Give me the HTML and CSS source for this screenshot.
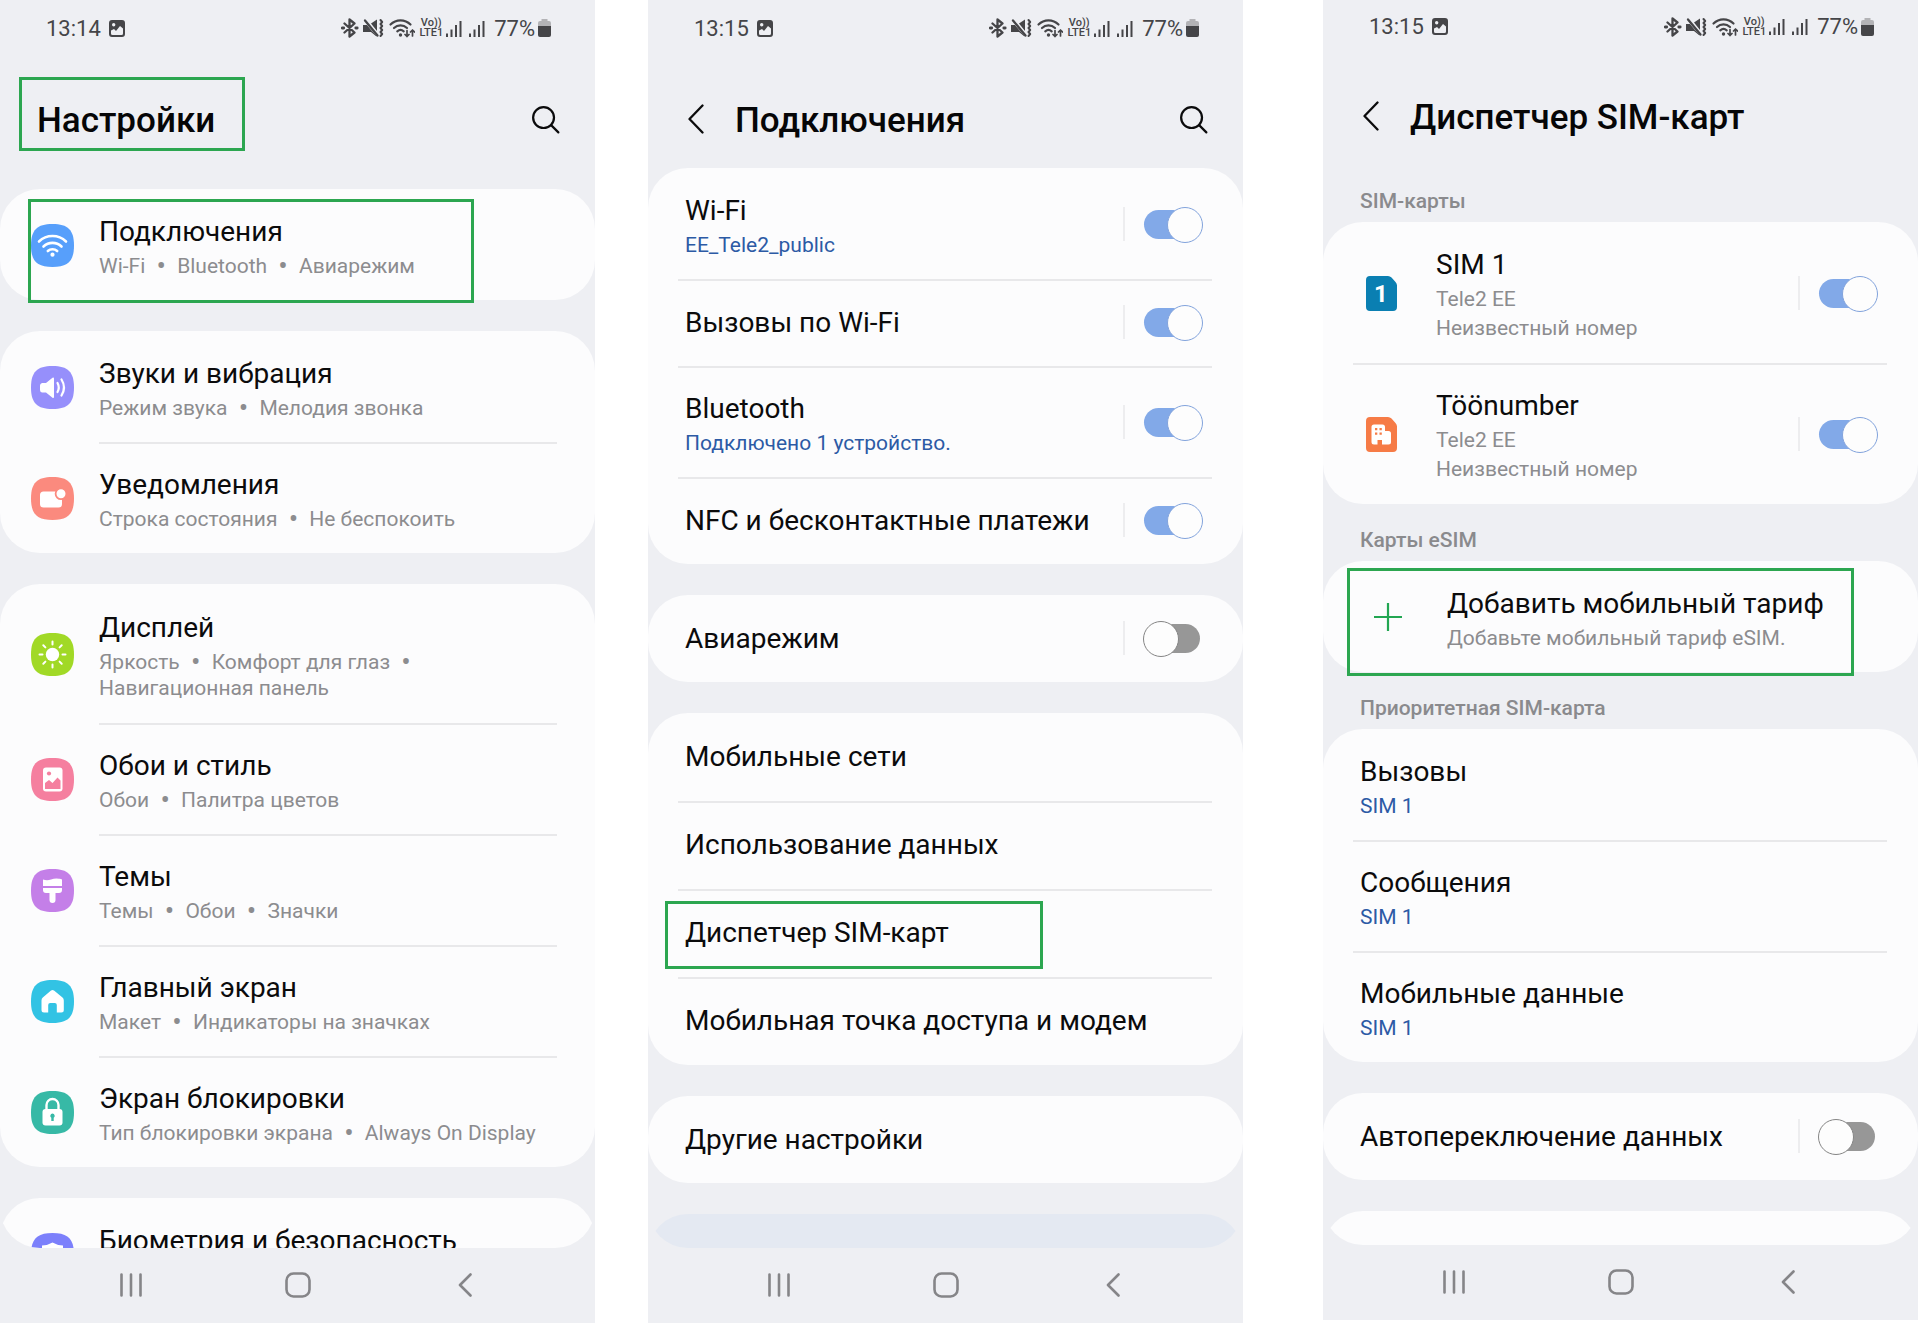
FILE: index.html
```html
<!DOCTYPE html>
<html lang="ru">
<head>
<meta charset="utf-8">
<meta name="viewport" content="width=device-width, initial-scale=1">
<title>Настройки eSIM</title>
<link rel="stylesheet" href="styles.css">
</head>
<body>
<svg class="sprite" aria-hidden="true">
  <symbol id="i-photo" viewBox="0 0 16 17"><path fill-rule="evenodd" d="M3 0h10a3 3 0 0 1 3 3v11a3 3 0 0 1-3 3H3a3 3 0 0 1-3-3V3a3 3 0 0 1 3-3zM2 10.500v3a1.500 1.500 0 0 0 1.500 1.500h9a1.500 1.500 0 0 0 1.500-1.500V8.500l-3-2.500-4 5-2-2zM4.700 3a1.700 1.700 0 1 0 0 3.400 1.700 1.700 0 0 0 0-3.400z"/></symbol>
  <symbol id="i-status" viewBox="0 0 74 20">
    <g fill="none" stroke="currentColor" stroke-width="2.300" stroke-linejoin="round" stroke-linecap="round">
      <path d="M3.500 5.500l10 9L8.500 18.500v-17l5 4-10 9"/>
      <path d="M1.300 10h1.400M14.800 10h1.400" stroke-width="2.800"/>
      <path d="M24 2.500l12.500 15"/>
      <path d="M39.500 2l1.700 2-1.700 2 1.700 2-1.700 2 1.700 2-1.700 2 1.700 2-1.700 2" stroke-width="2"/>
      <path d="M49.500 6.500a14 14 0 0 1 20 0M53 10a9.500 9.500 0 0 1 13 0M56.300 13.300a5 5 0 0 1 6.400 0" stroke-width="2.200"/>
      <path d="M66 12.500v6M64 16.500l2 2 2-2M71.500 18v-6M69.500 14l2-2 2 2" stroke-width="1.700"/>
    </g>
    <path fill="currentColor" d="M22 7h4l4.500 5.500 5 5v1L30 14h-8zM30 5.500L36 1.500v11.500z"/><circle cx="59.500" cy="17" r="1.700" fill="currentColor"/>
  </symbol>
  <symbol id="i-signal" viewBox="0 0 16 17"><path fill="currentColor" d="M0 13.500h2V17H0zM4.500 9.500h2V17h-2zM9 5h2v12H9zM13.500 1h2v16h-2z"/></symbol>
  <symbol id="i-battery" viewBox="0 0 13 18"><path fill="#b3b3b6" d="M3.500 0h6v2H11a2 2 0 0 1 2 2v4H0V4a2 2 0 0 1 2-2h1.500z"/><path fill="currentColor" d="M0 7h13v9a2 2 0 0 1-2 2H2a2 2 0 0 1-2-2z"/></symbol>
  <symbol id="i-search" viewBox="0 0 30 30"><g fill="none" stroke="currentColor" stroke-width="2.300" stroke-linecap="round"><circle cx="13" cy="13" r="10.800"/><path d="M20.800 20.800l7.500 7.500"/></g></symbol>
  <symbol id="i-back" viewBox="0 0 16 30"><path d="M14.500 1.500L1.500 15l13 13.500" fill="none" stroke="currentColor" stroke-width="2.300" stroke-linecap="round" stroke-linejoin="round"/></symbol>
  <symbol id="i-recents" viewBox="0 0 24 24"><path d="M2.500 1.500v21M12 1.500v21M21.500 1.500v21" stroke="currentColor" stroke-width="2.600" stroke-linecap="round"/></symbol>
  <symbol id="i-home" viewBox="0 0 26 26"><rect x="1.500" y="1.500" width="23" height="23" rx="7" fill="none" stroke="currentColor" stroke-width="2.600"/></symbol>
  <symbol id="i-prev" viewBox="0 0 14 24"><path d="M12.500 1.500L2 12l10.500 10.500" fill="none" stroke="currentColor" stroke-width="2.600" stroke-linecap="round" stroke-linejoin="round"/></symbol>
  <symbol id="i-tile" viewBox="0 0 43 43"><path d="M21.500 0C37 0 43 6 43 21.500S37 43 21.500 43 0 37 0 21.500 6 0 21.500 0z"/></symbol>
</svg>

<main class="screens">

  <section class="phone" aria-label="Настройки">
    <div class="status">
      <span class="clock">13:14</span>
      <svg class="photo"><use href="#i-photo"/></svg>
      <svg class="radios"><use href="#i-status"/></svg>
      <span class="volte"><span>Vo))</span><span>LTE1</span></span>
      <svg class="signal"><use href="#i-signal"/></svg>
      <svg class="signal second"><use href="#i-signal"/></svg>
      <span class="percent">77%</span>
      <svg class="battery"><use href="#i-battery"/></svg>
    </div>
    <header class="head head-root">
      <h1 class="marked mark-title">Настройки</h1>
      <button class="icon-btn" type="button" aria-label="Поиск"><svg class="search"><use href="#i-search"/></svg></button>
    </header>
    <div class="scroll">
      <nav class="card">
        <a class="row with-icon marked mark-connections" href="#">
          <svg class="tile" viewBox="0 0 43 43"><use href="#i-tile" fill="#579ffb"/><g fill="none" stroke="#fff" stroke-width="2.600" stroke-linecap="round"><path d="M8 17.500a19.500 19.500 0 0 1 27 0M12.500 22.500a13 13 0 0 1 18 0M16.800 27a7 7 0 0 1 9.400 0"/></g><circle cx="21.500" cy="30.700" r="2.100" fill="#fff"/></svg>
          <span class="text"><span class="name">Подключения</span><span class="sub">Wi-Fi <i>•</i> Bluetooth <i>•</i> Авиарежим</span></span>
        </a>
      </nav>
      <nav class="card">
        <a class="row with-icon" href="#">
          <svg class="tile" viewBox="0 0 43 43"><use href="#i-tile" fill="#968ffb"/><path fill="#fff" d="M11 17h4l6.500-5.200q1.500-.8 1.500 1v18q0 1.800-1.500 1L15 26.500h-4q-2-.5-2-2.500v-4.500q0-2 2-2.500z"/><g fill="none" stroke="#fff" stroke-width="2.200" stroke-linecap="round"><path d="M26.500 17q2.500 4.500 0 9M30.500 13.500q5 8 0 16"/></g></svg>
          <span class="text"><span class="name">Звуки и вибрация</span><span class="sub">Режим звука <i>•</i> Мелодия звонка</span></span>
        </a>
        <a class="row with-icon" href="#">
          <svg class="tile" viewBox="0 0 43 43"><use href="#i-tile" fill="#fb8a7e"/><rect x="9" y="14.500" width="22" height="16" rx="3.500" fill="#fff"/><circle cx="30" cy="16.800" r="5.400" fill="#fff" stroke="#fb8a7e" stroke-width="1.800"/></svg>
          <span class="text"><span class="name">Уведомления</span><span class="sub">Строка состояния <i>•</i> Не беспокоить</span></span>
        </a>
      </nav>
      <nav class="card">
        <a class="row with-icon tall" href="#">
          <svg class="tile" viewBox="0 0 43 43"><use href="#i-tile" fill="#a1d926"/><circle cx="21.500" cy="21.500" r="6.700" fill="#fff"/><path stroke="#fff" stroke-width="2" stroke-linecap="round" d="M21.500 8.500v3M21.500 31.500v3M8.500 21.500h3M31.500 21.500h3M12.300 12.300l2.100 2.100M28.600 28.600l2.100 2.100M12.300 30.700l2.100-2.100M28.600 14.400l2.100-2.100"/></svg>
          <span class="text"><span class="name">Дисплей</span><span class="sub">Яркость <i>•</i> Комфорт для глаз <i>•</i><br>Навигационная панель</span></span>
        </a>
        <a class="row with-icon" href="#">
          <svg class="tile" viewBox="0 0 43 43"><use href="#i-tile" fill="#f57f9f"/><rect x="12" y="9.500" width="19.500" height="24" rx="3" fill="#fff"/><circle cx="18" cy="15.500" r="2.100" fill="#f57f9f"/><path fill="#f57f9f" d="M14 25l4-3 3.500 3 5-5.500 3 3V31H14z"/></svg>
          <span class="text"><span class="name">Обои и стиль</span><span class="sub">Обои <i>•</i> Палитра цветов</span></span>
        </a>
        <a class="row with-icon" href="#">
          <svg class="tile" viewBox="0 0 43 43"><use href="#i-tile" fill="#c47fe8"/><path fill="#fff" d="M12 10.500q4 1.500 8 0t8-.8q2-.2 3 .8V17H12zM12 19h19v2q0 3-3 3h-3.500v7q0 3-3 3t-3-3v-7H15q-3 0-3-3z"/></svg>
          <span class="text"><span class="name">Темы</span><span class="sub">Темы <i>•</i> Обои <i>•</i> Значки</span></span>
        </a>
        <a class="row with-icon" href="#">
          <svg class="tile" viewBox="0 0 43 43"><use href="#i-tile" fill="#32c3e4"/><path fill="#fff" d="M20 10.500q1.500-1.200 3 0l8.500 7q1.300 1 1.300 3V30q0 2.500-2.500 2.500h-4.500V25q0-2-2-2h-4.600q-2 0-2 2v7.500H13q-2.500 0-2.500-2.500v-9.500q0-2 1.300-3z"/></svg>
          <span class="text"><span class="name">Главный экран</span><span class="sub">Макет <i>•</i> Индикаторы на значках</span></span>
        </a>
        <a class="row with-icon" href="#">
          <svg class="tile" viewBox="0 0 43 43"><use href="#i-tile" fill="#37b9a6"/><path fill="none" stroke="#fff" stroke-width="2.400" d="M15.500 19v-5a6 6 0 0 1 12 0v5"/><rect x="11.500" y="18" width="20" height="16.500" rx="3" fill="#fff"/><path fill="#37b9a6" d="M21.500 22.500a2.300 2.300 0 0 1 1.200 4.200V30h-2.400v-3.300a2.300 2.300 0 0 1 1.200-4.200z"/></svg>
          <span class="text"><span class="name">Экран блокировки</span><span class="sub">Тип блокировки экрана <i>•</i> Always On Display</span></span>
        </a>
      </nav>
      <nav class="card">
        <a class="row with-icon" href="#">
          <svg class="tile" viewBox="0 0 43 43"><use href="#i-tile" fill="#7c80fb"/><path fill="#fff" d="M21.500 9.500q5 3 10.500 3v9q0 8-10.500 13Q11 29.500 11 21.500v-9q5.500 0 10.500-3z"/></svg>
          <span class="text top"><span class="name">Биометрия и безопасность</span></span>
        </a>
      </nav>
    </div>
    <footer class="keys">
      <button type="button" aria-label="Недавние"><svg class="recents"><use href="#i-recents"/></svg></button>
      <button type="button" aria-label="Домой"><svg class="home"><use href="#i-home"/></svg></button>
      <button type="button" aria-label="Назад"><svg class="prev"><use href="#i-prev"/></svg></button>
    </footer>
  </section>

  <section class="phone phone-connections" aria-label="Подключения">
    <div class="status">
      <span class="clock">13:15</span>
      <svg class="photo"><use href="#i-photo"/></svg>
      <svg class="radios"><use href="#i-status"/></svg>
      <span class="volte"><span>Vo))</span><span>LTE1</span></span>
      <svg class="signal"><use href="#i-signal"/></svg>
      <svg class="signal second"><use href="#i-signal"/></svg>
      <span class="percent">77%</span>
      <svg class="battery"><use href="#i-battery"/></svg>
    </div>
    <header class="head">
      <button class="icon-btn back" type="button" aria-label="Назад"><svg class="chevron"><use href="#i-back"/></svg></button>
      <h1>Подключения</h1>
      <button class="icon-btn" type="button" aria-label="Поиск"><svg class="search"><use href="#i-search"/></svg></button>
    </header>
    <div class="scroll">
      <div class="card">
        <div class="row"><label class="text" for="wifi"><span class="name">Wi-Fi</span><span class="sub link">EE_Tele2_public</span></label><span class="toggle"><input id="wifi" type="checkbox" role="switch" checked></span></div>
        <div class="row single"><label class="text" for="calls"><span class="name">Вызовы по Wi-Fi</span></label><span class="toggle"><input id="calls" type="checkbox" role="switch" checked></span></div>
        <div class="row"><label class="text" for="bt"><span class="name">Bluetooth</span><span class="sub link">Подключено 1 устройство.</span></label><span class="toggle"><input id="bt" type="checkbox" role="switch" checked></span></div>
        <div class="row single"><label class="text" for="nfc"><span class="name">NFC и бесконтактные платежи</span></label><span class="toggle"><input id="nfc" type="checkbox" role="switch" checked></span></div>
      </div>
      <div class="card">
        <div class="row single"><label class="text" for="air"><span class="name">Авиарежим</span></label><span class="toggle"><input id="air" type="checkbox" role="switch"></span></div>
      </div>
      <nav class="card roomy">
        <a class="row single" href="#"><span class="name">Мобильные сети</span></a>
        <a class="row single" href="#"><span class="name">Использование данных</span></a>
        <a class="row single marked mark-manager" href="#"><span class="name">Диспетчер SIM-карт</span></a>
        <a class="row single" href="#"><span class="name">Мобильная точка доступа и модем</span></a>
      </nav>
      <nav class="card">
        <a class="row single" href="#"><span class="name">Другие настройки</span></a>
      </nav>
      <div class="card hint"></div>
    </div>
    <footer class="keys">
      <button type="button" aria-label="Недавние"><svg class="recents"><use href="#i-recents"/></svg></button>
      <button type="button" aria-label="Домой"><svg class="home"><use href="#i-home"/></svg></button>
      <button type="button" aria-label="Назад"><svg class="prev"><use href="#i-prev"/></svg></button>
    </footer>
  </section>

  <section class="phone phone-sim" aria-label="Диспетчер SIM-карт">
    <div class="status">
      <span class="clock">13:15</span>
      <svg class="photo"><use href="#i-photo"/></svg>
      <svg class="radios"><use href="#i-status"/></svg>
      <span class="volte"><span>Vo))</span><span>LTE1</span></span>
      <svg class="signal"><use href="#i-signal"/></svg>
      <svg class="signal second"><use href="#i-signal"/></svg>
      <span class="percent">77%</span>
      <svg class="battery"><use href="#i-battery"/></svg>
    </div>
    <header class="head">
      <button class="icon-btn back" type="button" aria-label="Назад"><svg class="chevron"><use href="#i-back"/></svg></button>
      <h1>Диспетчер SIM-карт</h1>
    </header>
    <div class="scroll">
      <h2>SIM-карты</h2>
      <div class="card">
        <div class="row sim">
          <svg class="chip" viewBox="0 0 31 35"><path fill="#0a7fb2" d="M4 0h18q2 0 3.500 1.500l4 4.500Q31 7.500 31 9.500V31q0 4-4 4H4q-4 0-4-4V4q0-4 4-4z"/><text class="chip-digit" x="15" y="26" text-anchor="middle">1</text></svg>
          <label class="text" for="sim1"><span class="name">SIM 1</span><span class="sub">Tele2 EE<br>Неизвестный номер</span></label><span class="toggle"><input id="sim1" type="checkbox" role="switch" checked></span>
        </div>
        <div class="row sim">
          <svg class="chip" viewBox="0 0 31 35"><path fill="#f67b46" d="M4 0h18q2 0 3.500 1.500l4 4.500Q31 7.500 31 9.500V31q0 4-4 4H4q-4 0-4-4V4q0-4 4-4z"/><path fill="#fff" d="M8 7.500h8.500q2.500 0 2.500 2.500v4h3.500q2.500 0 2.500 2.500V25q0 2.500-2.500 2.500H16V23h-4.500v4.500H8q-2.500 0-2.500-2.500V10q0-2.500 2.500-2.500z"/><path fill="#f67b46" d="M9 11h2.300v2.300H9zM13.500 11h2.300v2.300h-2.300zM9 15.500h2.300v2.300H9zM13.500 15.500h2.300v2.300h-2.300z"/></svg>
          <label class="text" for="sim2"><span class="name">Töönumber</span><span class="sub">Tele2 EE<br>Неизвестный номер</span></label><span class="toggle"><input id="sim2" type="checkbox" role="switch" checked></span>
        </div>
      </div>
      <h2>Карты eSIM</h2>
      <div class="card">
        <a class="row add marked mark-add" href="#">
          <svg class="plus" viewBox="0 0 28 28"><path d="M14 0v28M0 14h28" stroke="#22a652" stroke-width="2.200"/></svg>
          <span class="text"><span class="name">Добавить мобильный тариф</span><span class="sub">Добавьте мобильный тариф eSIM.</span></span>
        </a>
      </div>
      <h2>Приоритетная SIM-карта</h2>
      <nav class="card">
        <a class="row" href="#"><span class="text"><span class="name">Вызовы</span><span class="sub link">SIM 1</span></span></a>
        <a class="row" href="#"><span class="text"><span class="name">Сообщения</span><span class="sub link">SIM 1</span></span></a>
        <a class="row" href="#"><span class="text"><span class="name">Мобильные данные</span><span class="sub link">SIM 1</span></span></a>
      </nav>
      <div class="card">
        <div class="row single"><label class="text" for="auto"><span class="name">Автопереключение данных</span></label><span class="toggle"><input id="auto" type="checkbox" role="switch"></span></div>
      </div>
      <div class="card next"></div>
    </div>
    <footer class="keys">
      <button type="button" aria-label="Недавние"><svg class="recents"><use href="#i-recents"/></svg></button>
      <button type="button" aria-label="Домой"><svg class="home"><use href="#i-home"/></svg></button>
      <button type="button" aria-label="Назад"><svg class="prev"><use href="#i-prev"/></svg></button>
    </footer>
  </section>

</main>
</body>
</html>
```
FILE: styles.css
```css
* { box-sizing: border-box; }

body {
  margin: 0;
  background: #fff;
  color: #0b0b0c;
  font-family: Roboto, "Noto Sans", sans-serif;
}

svg { display: block; flex: none; }
.sprite { position: absolute; width: 0; height: 0; }
a { color: inherit; text-decoration: none; }
button { padding: 0; border: 0; background: none; color: inherit; font: inherit; }

.screens {
  display: flex;
  align-items: flex-start;
  padding-right: 2px;
  height: 100vh;
  overflow: hidden;
}

.phone {
  flex: 1;
  min-width: 0;
  height: 100%;
  display: flex;
  flex-direction: column;
  background: #eeeff3;
}
.phone-connections { margin-left: 53px; }
.phone-sim { margin-left: 80px; height: calc(100% - 3px); }

/* Status bar */
.status {
  flex: none;
  display: flex;
  align-items: center;
  height: 56px;
  padding: 0 44px 0 46px;
  color: #454548;
  font-size: 22px;
}
.phone-sim .status { height: 53px; }
.photo { width: 16px; height: 17px; margin-left: 8px; fill: currentColor; }
.radios { width: 74px; height: 20px; margin-left: auto; }
.volte {
  display: flex;
  flex-direction: column;
  align-items: center;
  margin: 0 3px 0 4px;
  font-size: 11px;
  font-weight: 500;
  line-height: 10px;
}
.signal { width: 16px; height: 17px; }
.second { margin-left: 7px; }
.percent { margin: 0 3px 0 9px; }
.battery { width: 13px; height: 18px; }

/* Title bar */
.head {
  flex: none;
  display: flex;
  align-items: center;
  height: 112px;
  padding: 14px 35px 0 40px;
}
.head-root { height: 133px; padding: 14px 35px 21px 37px; }
h1 {
  margin: 0;
  padding-top: 4px;
  font-size: 35px;
  line-height: 44px;
  font-weight: 500;
  color: #060607;
}
.icon-btn { margin-left: auto; }
.search { width: 29px; height: 29px; }
.back { margin: 0 31px 0 0; }
.chevron { width: 16px; height: 30px; }

/* Scrolling content */
.scroll {
  flex: 1;
  min-height: 0;
  overflow: hidden;
  border-radius: 0 0 40px 40px;
  display: flex;
  flex-direction: column;
}
.card { flex: none; border-radius: 40px; background: #fcfcfd; }
.card + .card { margin-top: 31px; }
.hint, .next { height: 111px; }
.hint { background: #e4e9f2; }

h2 {
  flex: none;
  margin: 0;
  padding: 23px 37px 8px;
  font-size: 21px;
  line-height: 26px;
  font-weight: 500;
  color: #8a8a8d;
}

.row {
  position: relative;
  display: flex;
  align-items: center;
  min-height: 111px;
  padding: 27px 42px 21px 37px;
}
.row + .row::before {
  content: "";
  position: absolute;
  top: 0;
  left: 30px;
  right: 31px;
  height: 2px;
  background: #e8e8ea;
}
.single { min-height: 87px; padding-top: 26px; padding-bottom: 26px; }
.roomy .single { min-height: 88px; }
.with-icon { padding-left: 31px; padding-right: 38px; gap: 25px; }
.with-icon + .with-icon::before { left: 99px; right: 38px; }
.tall { min-height: 139px; }
.sim { padding-left: 43px; padding-bottom: 20px; gap: 39px; }
.add { padding-left: 51px; gap: 45px; }
.tile { width: 43px; height: 43px; margin-top: -5px; }
.chip { width: 31px; height: 35px; margin-top: -5px; }
.chip-digit { fill: #fff; font-size: 24px; font-weight: 700; }
.plus { width: 28px; height: 28px; margin-top: -5px; }

.text { flex: 1; display: flex; flex-direction: column; gap: 5px; min-width: 0; }
.top { align-self: flex-start; }
.name { font-size: 28px; line-height: 32px; white-space: nowrap; }
.sub { font-size: 21px; line-height: 26px; color: #8c8c8f; white-space: nowrap; }
.sub i { margin: 0 6px; font-size: 28px; font-style: normal; line-height: 0; vertical-align: -2px; }
.sim .text { gap: 4px; }
.sim .sub { line-height: 29px; }
.sub.link { color: #2c5aa5; }

/* Switches */
.toggle {
  display: flex;
  height: 34px;
  margin-top: -6px;
  padding: 0 1px 0 19px;
  border-left: 2px solid #ededef;
}
.single .toggle { margin-top: -1px; }
.toggle input {
  appearance: none;
  position: relative;
  width: 56px;
  height: 34px;
  margin: 0;
}
.toggle input::before {
  content: "";
  position: absolute;
  inset: 3px 0 2px;
  border-radius: 15px;
  background: #979797;
}
.toggle input::after {
  content: "";
  position: absolute;
  top: 0;
  left: -1px;
  width: 34px;
  height: 34px;
  border: 1px solid #858585;
  border-radius: 50%;
  background: #fdfdfd;
}
.toggle input:checked::before { background: #82a9e8; }
.toggle input:checked::after { left: 23px; border-color: #82a3dc; }

/* Highlight frames drawn over the screens */
.marked { position: relative; }
.marked::after {
  content: "";
  position: absolute;
  border: 3px solid #2ca650;
  pointer-events: none;
}
.mark-title::after { inset: -18px -30px -8px -18px; }
.mark-connections::after { inset: 10px 121px -3px 28px; }
.mark-manager::after { inset: 12px 200px 8px 17px; }
.mark-add::after { inset: 7px 64px -4px 24px; }

/* Navigation keys */
.keys {
  flex: none;
  display: flex;
  align-items: center;
  justify-content: space-between;
  height: 75px;
  padding: 0 117px 2px 118px;
  color: #858588;
}
.keys button { display: flex; justify-content: center; width: 26px; }
.recents { width: 24px; height: 24px; }
.home { width: 26px; height: 26px; }
.prev { width: 14px; height: 24px; }
```
